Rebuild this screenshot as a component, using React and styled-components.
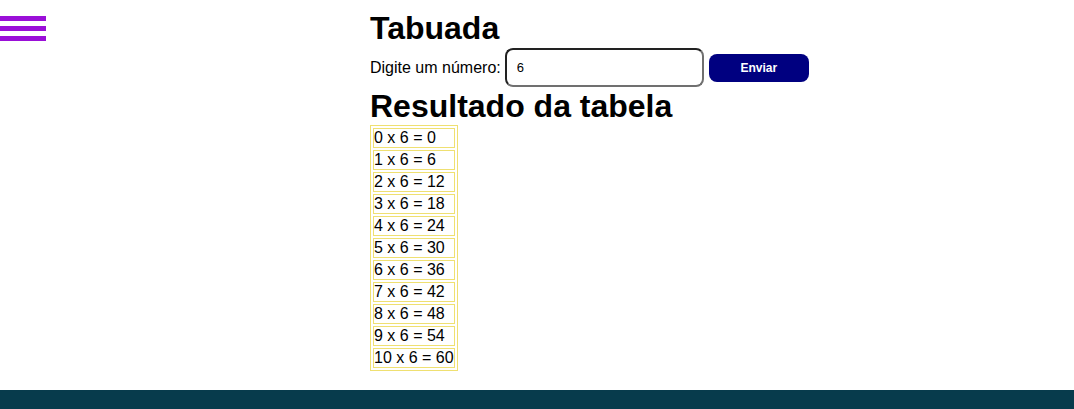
import React, { useState } from 'react';
import styled, { createGlobalStyle } from 'styled-components';

const GlobalStyle = createGlobalStyle`
  body {
    margin: 0;
    font-family: "Liberation Sans", Arial, sans-serif;
    background: #fff;
    color: #000;
  }
`

const Page = styled.div`
  display: grid;
  grid-template-columns: 370px 1fr;
`

const MenuButton = styled.button`
  display: flex;
  flex-direction: column;
  gap: 5px;
  width: 46px;
  margin-top: 16px;
  padding: 0;
  border: 0;
  background: none;
  cursor: pointer;
`

const MenuBar = styled.span`
  display: block;
  width: 46px;
  height: 5px;
  background: #9a0fd8;
`

const Main = styled.main`
  padding-top: 10px;
`

const Title = styled.h1`
  margin: 0;
  font-size: 32px;
  font-weight: bold;
  line-height: 37px;
`

const Form = styled.form`
  display: flex;
  align-items: center;
  margin-top: 1px;
  margin-bottom: 1px;
  height: 39px;
`

const Label = styled.label`
  font-size: 16px;
  margin-right: 4px;
`

const NumberInput = styled.input`
  box-sizing: border-box;
  width: 199px;
  height: 39px;
  padding: 0 10px;
  border: 2px solid;
  border-color: #222 #707070 #707070 #222;
  border-radius: 8px;
  font-family: "Liberation Sans", Arial, sans-serif;
  font-size: 13px;
  outline: none;
`

const SendButton = styled.button`
  width: 100px;
  height: 28px;
  margin-left: 5px;
  border: 0;
  border-radius: 8px;
  background: #000080;
  color: #fff;
  font-family: "Liberation Sans", Arial, sans-serif;
  font-size: 12px;
  font-weight: bold;
  cursor: pointer;
`

const ResultTable = styled.table`
  border: 1px solid #efe071;
  border-spacing: 2px;
`

const Cell = styled.td`
  border: 1px solid #efe071;
  padding: 0;
  font-size: 16px;
  line-height: 18px;
`

const Footer = styled.footer`
  margin-top: 19px;
  height: 19px;
  background: #073b4c;
`

export default function App() {
  const [numero, setNumero] = useState('6')
  const [tabela, setTabela] = useState(6)

  const enviar = (e) => {
    e.preventDefault()
    setTabela(Number(numero) || 0)
  }

  const linhas = Array.from({length: 11}, (_, i) => i)

  return (
    <>
      <GlobalStyle/>
      <Page>
        <div>
          <MenuButton aria-label="Menu">
            <MenuBar/>
            <MenuBar/>
            <MenuBar/>
          </MenuButton>
        </div>
        <Main>
          <Title>Tabuada</Title>
          <Form onSubmit={enviar}>
            <Label htmlFor="numero">Digite um número:</Label>
            <NumberInput id="numero" value={numero} onChange={e => setNumero(e.target.value)}/>
            <SendButton type="submit">Enviar</SendButton>
          </Form>
          <Title>Resultado da tabela</Title>
          <ResultTable>
            <tbody>
              {linhas.map(i => (
                <tr key={i}>
                  <Cell>{i} x {tabela} = {i * tabela}</Cell>
                </tr>
              ))}
            </tbody>
          </ResultTable>
        </Main>
      </Page>
      <Footer/>
    </>
  )
}
